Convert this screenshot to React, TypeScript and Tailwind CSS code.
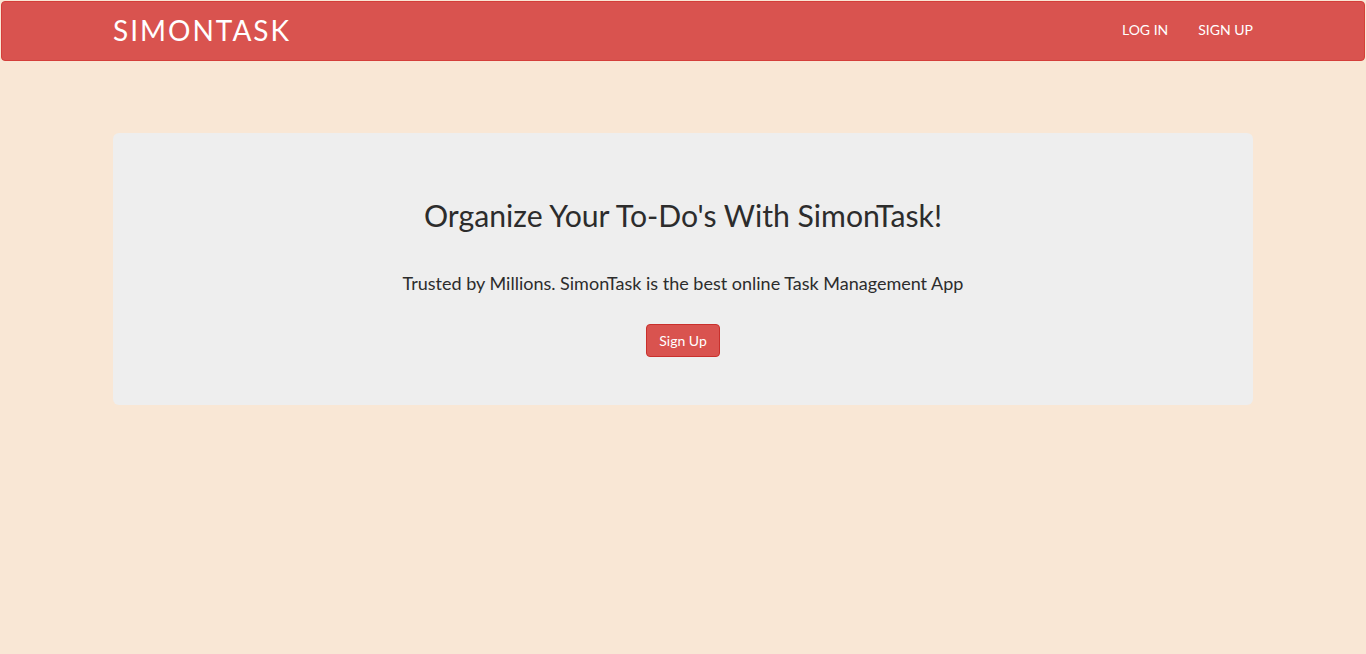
export default function App() {
  return (
    <div className="min-h-[654px] bg-[#f9e7d5] pt-px" style={{ fontFamily: "Lato, 'Open Sans', sans-serif" }}>
      <nav className="mx-px h-[60px] rounded-[4px] bg-[#d9534f] border border-[#d43f3a]">
        <div className="mx-auto flex h-full w-[1140px] items-center justify-between pb-[3px]">
          <span className="text-[28px] tracking-[2px] text-white leading-none">SIMONTASK</span>
          <div className="flex gap-[30px] text-[14px] text-white">
            <span>LOG IN</span>
            <span>SIGN UP</span>
          </div>
        </div>
      </nav>
      <div className="mx-auto mt-[72px] flex h-[272px] w-[1140px] flex-col items-center rounded-[6px] bg-[#eeeeee] text-[#2c2c2c]">
        <h1 className="mt-[63px] text-[30.2px] leading-[38px]">Organize Your To-Do's With SimonTask!</h1>
        <p className="mt-[36px] text-[18px] leading-[26px]">Trusted by Millions. SimonTask is the best online Task Management App</p>
        <button className="mt-[28px] h-[33px] rounded-[4px] border border-[#c9302c] bg-[#d9534f] px-[12px] text-[14px] text-white">Sign Up</button>
      </div>
    </div>
  );
}
